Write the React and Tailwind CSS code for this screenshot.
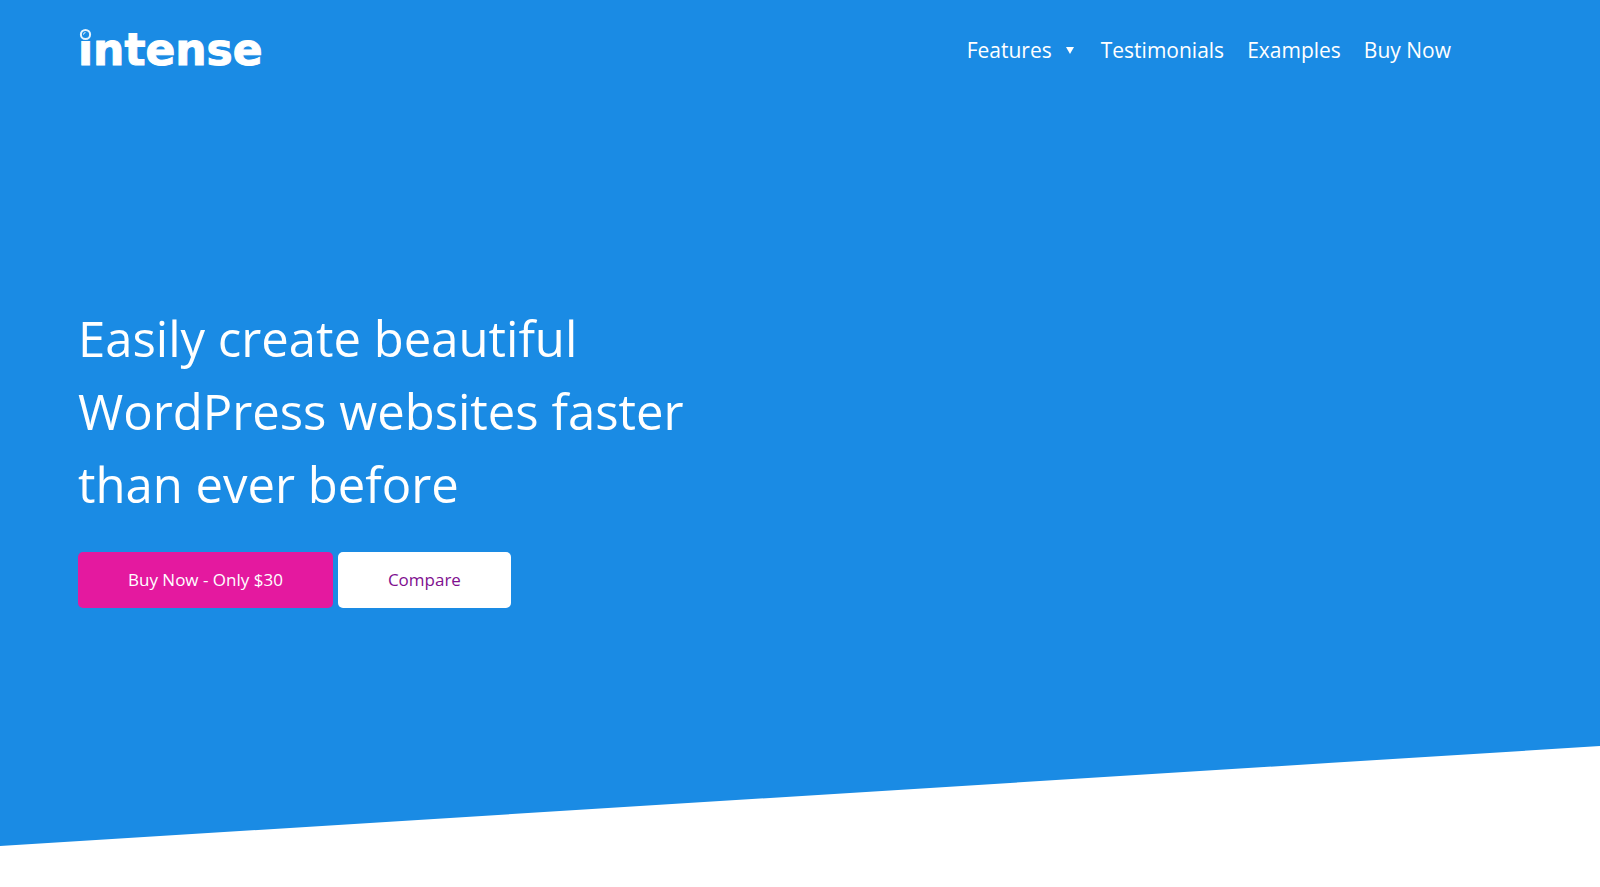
const navLinks = [
  { label: "Features", href: "#features", hasMenu: true },
  { label: "Testimonials", href: "#testimonials" },
  { label: "Examples", href: "#examples" },
  { label: "Buy Now", href: "#buy" },
];

function Logo() {
  return (
    <a
      href="#home"
      className="relative block font-['DejaVu_Sans',sans-serif] text-[44px] leading-[44px] font-bold text-white [-webkit-text-stroke:1px_white]"
    >
      intense
      {/* Ring over the dot of the i */}
      <svg viewBox="0 0 15 13" aria-hidden="true" className="absolute left-0 top-0 h-[13px] w-[15px]">
        <path d="M0 0h15v13H0z" fill="#1a8be4" />
        <circle cx="7.5" cy="6.5" r="4.6" fill="none" stroke="#e6f3fd" strokeWidth="2" />
        <path d="M5.5 6.6a2 2 0 0 1 2-2" fill="none" stroke="#e6f3fd" strokeWidth="1" />
      </svg>
    </a>
  );
}

function Header() {
  return (
    <header className="flex items-start justify-between pt-6 pr-[149px] pl-[78px]">
      <div className="pt-1">
        <Logo />
      </div>
      <nav className="flex items-center gap-[23px] text-[21px] leading-[52px] text-white">
        {navLinks.map((link) => (
          <a key={link.label} href={link.href} className="flex items-center">
            {link.label}
            {link.hasMenu && (
              <svg viewBox="0 0 8 7" aria-hidden="true" className="mr-1 ml-[14px] h-[7px] w-2">
                <path d="M0 0h8L4 7z" fill="currentColor" />
              </svg>
            )}
          </a>
        ))}
      </nav>
    </header>
  );
}

export default function App() {
  return (
    <div className="min-h-screen bg-white font-['Open_Sans',sans-serif]">
      <div className="bg-[#1a8be4]">
        <Header />
        <main className="px-[78px] pt-[226px] pb-[138px]">
          <h1 className="max-w-[640px] text-[49px] leading-[73px] text-white">
            Easily create beautiful WordPress websites faster than ever before
          </h1>
          <div className="mt-[31px] flex gap-[5px] text-[17px] leading-6">
            <button type="button" className="rounded-[5px] bg-[#e4199f] px-[50px] py-4 text-white">
              Buy Now - Only $30
            </button>
            <button type="button" className="rounded-[5px] bg-white px-[50px] py-4 text-[#800f8f]">
              Compare
            </button>
          </div>
        </main>
      </div>
      {/* Slanted bottom edge of the hero */}
      <svg viewBox="0 0 1600 100" preserveAspectRatio="none" aria-hidden="true" className="block h-[100px] w-full">
        <path d="M0 0h1600L0 100z" fill="#1a8be4" />
      </svg>
    </div>
  );
}
